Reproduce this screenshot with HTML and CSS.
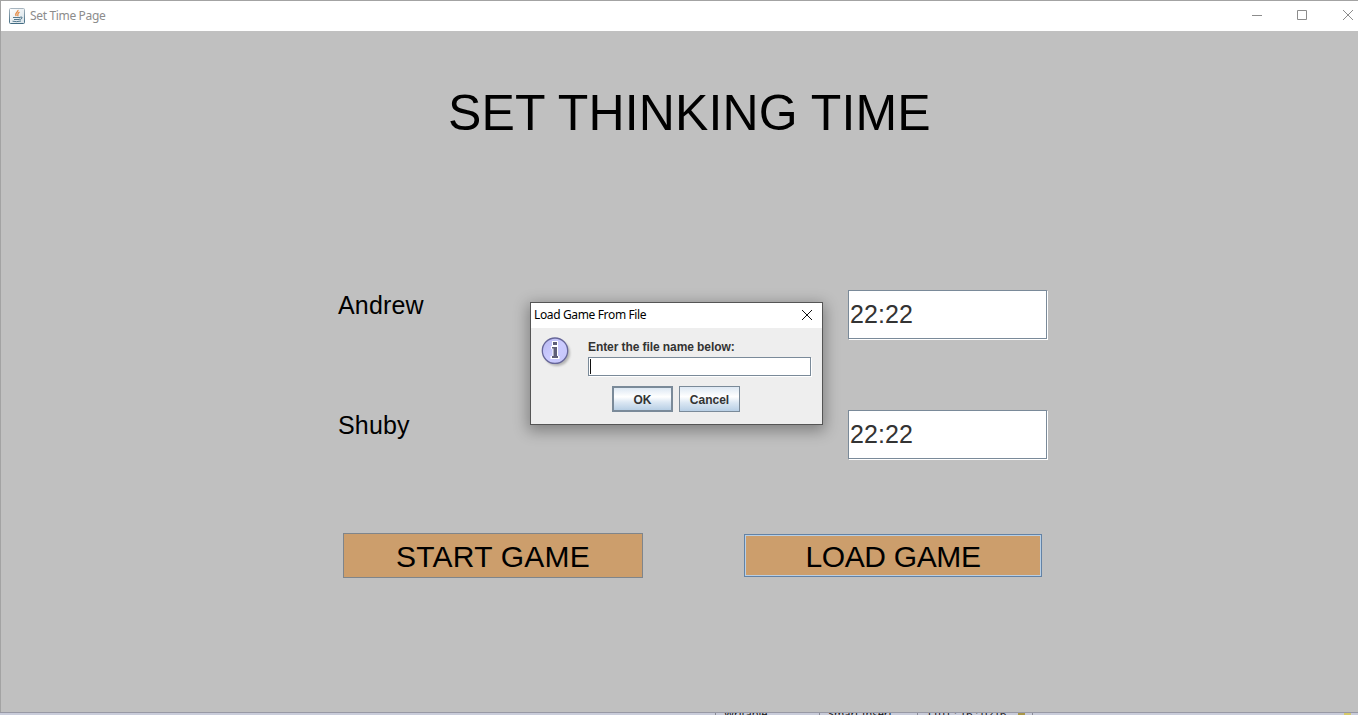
FILE: index.html
```html
<!DOCTYPE html>
<html lang="en">
<head>
<meta charset="utf-8">
<title>Set Time Page</title>
<link rel="stylesheet" href="styles.css">
</head>
<body>
<div class="window">
  <header class="titlebar">
    <svg class="java" width="16" height="16" viewBox="0 0 16 16">
      <defs><linearGradient id="frame" x2="0" y2="1"><stop offset="0" stop-color="#a7b5bf"/><stop offset="1" stop-color="#426b82"/></linearGradient>
      <linearGradient id="panel" x2="1" y2="1"><stop offset="0" stop-color="#fff"/><stop offset="1" stop-color="#d7e2e8"/></linearGradient></defs>
      <rect x=".5" y=".5" width="15" height="15" rx="1" fill="url(#panel)" stroke="url(#frame)"/>
      <path d="M9 2C9.500 4 5.200 4.800 7.200 8M10.500 4.200C7.500 5.500 9.500 6.500 8.700 8.300" fill="none" stroke="#e58b45" stroke-width="1.300"/>
      <path d="M4 9.500h7M5 11.500h5M3.500 13.200q4 1 8.500-.2M11 9.200q3-.7 2 1t-3 1" fill="none" stroke="#54798e"/>
    </svg>
    <span class="window-name">Set Time Page</span>
    <svg class="controls" width="104" height="12" viewBox="0 0 104 12" fill="none" stroke="#8c8c8c">
      <path d="M0 6.500h10M45.500 1.500h9v9h-9zM91 1l10 10M101 1l-10 10"/>
    </svg>
  </header>
  <main class="content">
    <h1 class="heading">SET THINKING TIME</h1>
    <div class="row first">
      <label class="player" for="t1">Andrew</label>
      <input class="time" id="t1" value="22:22">
    </div>
    <div class="row">
      <label class="player" for="t2">Shuby</label>
      <input class="time" id="t2" value="22:22">
    </div>
    <div class="actions">
      <button class="action start">START GAME</button>
      <button class="action load">LOAD GAME</button>
    </div>
  </main>
  <footer class="status">
    <span class="cell writable">Writable</span><span class="cell insert">Smart Insert</span><span class="cell position">1101 : 16 : 0216</span><i class="mark"></i><span class="cell end"></span><i class="mark last"></i>
  </footer>
</div>
<section class="dialog">
  <header class="dialog-title">
    <span>Load Game From File</span>
    <svg width="12" height="12" viewBox="0 0 12 12" stroke="#111"><path d="M1 1l10 10M11 1L1 11"/></svg>
  </header>
  <div class="dialog-body">
    <svg class="info" width="32" height="32" viewBox="0 0 32 32">
      <defs><linearGradient id="ball" x2="1" y2="1"><stop offset="0" stop-color="#b8b8f0"/><stop offset=".5" stop-color="#ccccff"/><stop offset="1" stop-color="#c4c4fa"/></linearGradient>
      <filter id="soft" x="-20%" y="-20%" width="140%" height="140%"><feGaussianBlur stdDeviation="1.100"/></filter></defs>
      <circle cx="16" cy="16" r="13" fill="#b4b4b4" filter="url(#soft)"/>
      <circle cx="14" cy="13.700" r="12.700" fill="url(#ball)" stroke="#666699" stroke-width="1.300"/>
      <path d="M11 4h6v5h-6zM10 9h7v10h1.500v3h-9v-3h2v-7h-1.500z" fill="#fff"/>
      <path d="M12 5h4v3h-4zM11 10h5v9h1v2h-6v-2h1.500v-7.500h-1.500z" fill="#5f5f78"/>
    </svg>
    <div class="form">
      <label class="prompt" for="file">Enter the file name below:</label>
      <div class="file-field"><input class="file" id="file"><i class="caret"></i></div>
    </div>
  </div>
  <div class="dialog-actions">
    <button class="dialog-button ok">OK</button>
    <button class="dialog-button">Cancel</button>
  </div>
</section>
</body>
</html>
```

FILE: styles.css
```css
* { box-sizing: border-box; }
body { margin: 0; overflow: hidden; font-family: "Liberation Sans", Arial, sans-serif; background: #c0c0c0; }
input, button { font: inherit; margin: 0; border-radius: 0; outline: 0; }
svg { display: block; flex: none; }
.window { height: 715px; display: flex; flex-direction: column; }
.titlebar { flex: none; height: 31px; display: flex; align-items: center; padding: 0 4px 1px 8px; border: 1px solid #a3a3a3; border-width: 1px 0 0 1px; background: #fff; }
.window-name { flex: 1; margin-left: 5px; padding-top: 1px; font: 12px/16px "Noto Sans", sans-serif; letter-spacing: -.34px; color: #8c8c8c; }
.controls { margin: 0 -2px 1px 0; }
.content { flex: none; height: 681px; padding: 54px 0 0 337px; border-left: 1px solid #a3a3a3; background: #c0c0c0; }
.heading { margin: 0 0 0 110px; font-size: 50px; line-height: 57px; font-weight: 400; letter-spacing: .12px; color: #000; white-space: nowrap; }
.row { display: flex; justify-content: space-between; width: 709px; height: 50px; margin-top: 70px; }
.row.first { margin-top: 148px; }
.player { line-height: 29px; padding-top: 1px; font-size: 25px; letter-spacing: .15px; color: #000; }
.time { width: 199px; height: 49px; padding: 0 1px 1px; border: 1px solid #7a8a99; background: #fff; font-size: 25px; letter-spacing: .1px; color: #333; box-shadow: 1px 1px #fff; }
.actions { display: flex; align-items: center; gap: 101px; margin: 73px 0 0 5px; }
.action { width: 300px; height: 45px; padding: 2px 0 0; border: 1px solid #7f858b; background: #cc9e6c; font-size: 30px; line-height: 34px; color: #000; white-space: nowrap; }
.action.start { letter-spacing: .25px; }
.action.load { width: 298px; height: 43px; letter-spacing: -.35px; border-color: #6382a5; box-shadow: inset 0 0 0 1px #b8cfe5; }
.status { flex: none; height: 3px; display: flex; overflow: hidden; padding-left: 715px; border-top: 1px solid #9899a5; background: #c9ccda; }
.cell { flex: none; height: 16px; margin-top: -6px; padding-left: 8px; border-left: 1px solid #888a96; font: 11px/13px "Noto Sans", sans-serif; color: #111; white-space: nowrap; }
.writable { width: 104px; }
.insert { width: 98px; }
.position { width: 101px; }
.mark { width: 7px; height: 3px; background: #a99648; }
.end { width: 20px; margin-left: 7px; }
.mark.last { margin-left: 292px; background: #d6c96a; }
.dialog { position: absolute; left: 530px; top: 302px; width: 293px; height: 123px; border: 1px solid #555; background: #eee; box-shadow: 0 4px 14px 2px rgba(0,0,0,.33); }
.dialog-title { display: flex; justify-content: space-between; align-items: center; height: 25px; padding: 0 9px 2px 3px; background: #fff; font: 12px/16px "Noto Sans", sans-serif; letter-spacing: -.36px; color: #000; }
.dialog-body { display: flex; padding: 9px 11px 0 10px; height: 50px; }
.form { flex: 1; margin-left: 15px; }
.prompt { display: block; padding-top: 3px; height: 20px; font-size: 12px; line-height: 15px; font-weight: 700; letter-spacing: -.08px; color: #333; white-space: nowrap; }
.file-field { position: relative; display: flex; }
.file { width: 223px; height: 19px; padding: 0 2px; border: 1px solid #7a8a99; background: #fff; box-shadow: 1px 1px #fff; }
.caret { position: absolute; left: 2px; top: 2px; width: 1px; height: 15px; background: #111; }
.dialog-actions { display: flex; gap: 6px; padding: 8px 0 0 81px; }
.dialog-button { width: 61px; height: 26px; padding: 2px 0 0; border: 1px solid #7a8a99; background: linear-gradient(#dde8f3, #fff 40%, #dbe7f3 65%, #b8cfe5); font-size: 12px; font-weight: 700; color: #333; }
.dialog-button.ok { border-width: 2px; }
```
